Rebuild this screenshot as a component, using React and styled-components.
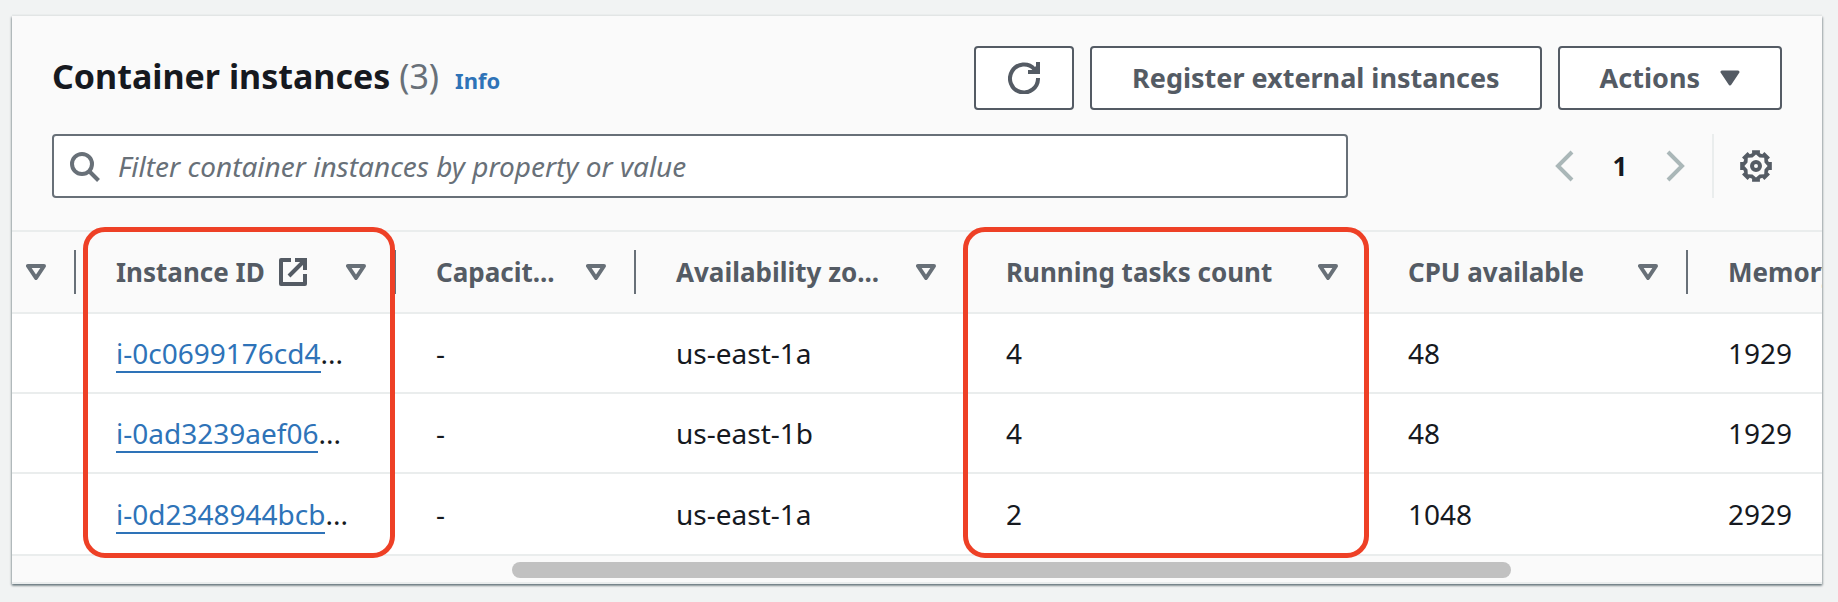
import React from "react";
import styled, { createGlobalStyle } from "styled-components";

const color = {
  page: "#f1f3f3",
  panel: "#fafafa",
  line: "#eaeded",
  text: "#16191f",
  control: "#545b64",
  muted: "#687078",
  link: "#2e73b8",
  disabled: "#aab7b8",
  highlight: "#ee4026",
};

const GlobalStyle = createGlobalStyle`
  *, *::before, *::after { box-sizing: border-box; }
  body {
    margin: 0;
    background: ${color.page};
    color: ${color.text};
    font: 28px/40px "Noto Sans", "Open Sans", sans-serif;
  }
  button, input { font: inherit; color: inherit; }
`;

const Page = styled.main`
  padding: 16px 16px 18px 12px;
`;

const Panel = styled.section`
  background: ${color.panel};
  box-shadow:
    0 2px 2px 0 rgba(0, 28, 36, 0.3),
    1px 1px 2px 0 rgba(0, 28, 36, 0.25),
    -1px 1px 2px 0 rgba(0, 28, 36, 0.25),
    0 -2px 0 0 ${color.line};
`;

const PanelHeader = styled.header`
  display: flex;
  flex-direction: column;
  gap: 24px;
  padding: 30px 40px 32px;
`;

const HeaderRow = styled.div`
  display: flex;
  align-items: center;
  justify-content: space-between;
`;

const TitleGroup = styled.div`
  display: flex;
  align-items: baseline;
  gap: 16px;
  padding-bottom: 2px;
`;

const Title = styled.h2`
  margin: 0;
  font-size: 34px;
  line-height: 44px;
  font-weight: 700;
`;

const Count = styled.span`
  color: ${color.muted};
  font-weight: 400;
`;

const InfoLink = styled.a`
  color: ${color.link};
  font-size: 22px;
  font-weight: 700;
  text-decoration: none;
`;

const ButtonGroup = styled.div`
  display: flex;
  gap: 16px;
`;

const Button = styled.button`
  display: inline-flex;
  align-items: center;
  justify-content: center;
  gap: 20px;
  height: 64px;
  padding: 0 ${(p) => (p.$iconOnly ? 32 : 40)}px;
  border: 2px solid ${color.control};
  border-radius: 4px;
  background: #fff;
  color: ${color.control};
  font-size: 27px;
  font-weight: 700;
  white-space: nowrap;
`;

const SearchBox = styled.label`
  display: flex;
  align-items: center;
  gap: 18px;
  flex: 0 1 1296px;
  height: 64px;
  padding: 0 14px;
  border: 2px solid ${color.muted};
  border-radius: 4px;
  background: #fff;
  color: ${color.muted};
`;

const SearchInput = styled.input`
  flex: 1;
  min-width: 0;
  padding: 0;
  border: 0;
  outline: 0;
  background: transparent;
  color: ${color.text};
  &::placeholder {
    color: ${color.muted};
    font-style: italic;
    opacity: 1;
  }
`;

const Tools = styled.div`
  display: flex;
  align-items: center;
  height: 64px;
`;

const Pagination = styled.nav`
  display: flex;
  align-items: center;
  height: 100%;
  padding-right: 26px;
  border-right: 2px solid ${color.line};
`;

const IconButton = styled.button`
  display: inline-flex;
  align-items: center;
  justify-content: center;
  padding: 0;
  border: 0;
  background: none;
  color: ${(p) => (p.disabled ? color.disabled : color.control)};
`;

const PageNumber = styled.button`
  width: 92px;
  padding: 0;
  border: 0;
  background: none;
  font-size: 26px;
  font-weight: 700;
`;

const Preferences = styled.div`
  display: flex;
  padding: 0 10px 0 26px;
`;

const TableArea = styled.div`
  position: relative;
`;

const TableViewport = styled.div`
  overflow: hidden;
  border-top: 2px solid ${color.line};
`;

const Table = styled.table`
  width: 1996px;
  min-width: 100%;
  table-layout: fixed;
  border-collapse: separate;
  border-spacing: 0;
`;

const HeaderCell = styled.th`
  height: 82px;
  padding: 0;
  border-bottom: 2px solid ${color.line};
  color: ${color.control};
  font-size: 26px;
  text-align: left;
`;

const HeaderContent = styled.div`
  display: flex;
  align-items: center;
  justify-content: space-between;
  height: 44px;
  padding: 0 28px 0 ${(p) => (p.$narrow ? 0 : 40)}px;
  border-right: 2px solid ${(p) => (p.$last ? "transparent" : color.muted)};
`;

const HeaderLabel = styled.span`
  display: flex;
  align-items: center;
  gap: 14px;
  white-space: nowrap;
`;

const Row = styled.tr`
  background: #fff;
`;

const Cell = styled.td`
  height: ${(p) => (p.$last ? 82 : 80)}px;
  padding: 0 0 0 40px;
  border-bottom: 2px solid ${color.line};
  white-space: nowrap;
`;

const InstanceLink = styled.a`
  display: inline-block;
  border-bottom: 2px solid ${color.link};
  color: ${color.link};
  line-height: 36px;
  text-decoration: none;
`;

const Highlight = styled.div`
  position: absolute;
  top: -3px;
  bottom: -2px;
  left: ${(p) => p.$left}px;
  width: ${(p) => p.$width}px;
  border: 5px solid ${color.highlight};
  border-radius: 22px;
  pointer-events: none;
`;

const ScrollTrack = styled.div`
  height: 28px;
  padding: 6px 0;
  border-bottom: 2px solid ${color.line};
`;

const ScrollThumb = styled.div`
  width: 55.2%;
  height: 16px;
  margin-left: 27.6%;
  border-radius: 8px;
  background: #c1c1c1;
`;

const SearchIcon = () => (
  <svg width="32" height="36" viewBox="0 0 32 36" fill="none" stroke="currentColor" strokeWidth="4" aria-hidden="true">
    <circle cx="14" cy="16" r="10" />
    <path d="M21 23 30.500 32.500" />
  </svg>
);

const RefreshIcon = () => (
  <svg width="32" height="32" viewBox="0 0 32 32" fill="none" stroke="currentColor" strokeWidth="4" aria-hidden="true">
    <path d="M30 16A14 14 0 1 1 26.500 7.200" />
    <path d="M20 10h10V0" />
    <path d="M28 4v6h-6z" fill="currentColor" stroke="none" />
  </svg>
);

const CaretIcon = () => (
  <svg width="20" height="16" viewBox="0 0 20 16" aria-hidden="true">
    <path d="M2 2h16l-8 12z" fill="currentColor" stroke="currentColor" strokeWidth="3" strokeLinejoin="round" />
  </svg>
);

const SortIcon = () => (
  <svg width="20" height="16" viewBox="0 0 20 16" aria-hidden="true">
    <path d="M2 2h16l-8 12z" fill="none" stroke={color.muted} strokeWidth="4" strokeLinejoin="round" />
  </svg>
);

const ChevronIcon = ({ direction }) => (
  <svg width="20" height="32" viewBox="0 0 20 32" fill="none" stroke="currentColor" strokeWidth="4" aria-hidden="true">
    <path d={direction === "left" ? "M18 2 4 16l14 14" : "M2 2l14 14L2 30"} />
  </svg>
);

const polar = (radius, degrees) => {
  const a = (degrees * Math.PI) / 180;
  return `${(16 + radius * Math.cos(a)).toFixed(2)} ${(16 + radius * Math.sin(a)).toFixed(2)}`;
};

const teeth = Array.from({ length: 8 }, (_, i) => i * 45);

const gearOutline = teeth
  .map((t) => [polar(13.3, t - 17), polar(16.3, t - 14), polar(16.3, t + 14), polar(13.3, t + 17)].join(" L"))
  .join(" L");

const gearOpening = teeth.map((t) => [polar(11.6, t), polar(9.2, t + 22.5)].join(" L")).join(" L");

const GearIcon = () => (
  <svg width="32" height="32" viewBox="0 0 32 32" aria-hidden="true">
    <path d={`M${gearOutline}Z M${gearOpening}Z`} fill="currentColor" fillRule="evenodd" />
    <circle cx="16" cy="16" r="4" fill="none" stroke="currentColor" strokeWidth="4" />
  </svg>
);

const ExternalIcon = () => (
  <svg width="28" height="28" viewBox="0 0 28 28" fill="none" stroke="currentColor" strokeWidth="4" aria-hidden="true">
    <path d="M12 2H2v24h24V16" strokeLinejoin="round" />
    <path d="M16 2h10v10M26 2 10 18" />
  </svg>
);

const columns = [
  { key: "prev", width: 64, label: "", narrow: true },
  { key: "id", width: 320, label: "Instance ID", external: true },
  { key: "capacity", width: 240, label: "Capacit..." },
  { key: "zone", width: 330, label: "Availability zo..." },
  { key: "tasks", width: 402, label: "Running tasks count" },
  { key: "cpu", width: 320, label: "CPU available" },
  { key: "memory", width: 320, label: "Memory available", last: true },
];

const rows = [
  { id: "i-0c0699176cd4", zone: "us-east-1a", tasks: 4, cpu: 48, memory: 1929 },
  { id: "i-0ad3239aef06", zone: "us-east-1b", tasks: 4, cpu: 48, memory: 1929 },
  { id: "i-0d2348944bcb", zone: "us-east-1a", tasks: 2, cpu: 1048, memory: 2929 },
];

export default function App() {
  return (
    <Page>
      <GlobalStyle />
      <Panel>
        <PanelHeader>
          <HeaderRow>
            <TitleGroup>
              <Title>
                Container instances <Count>(3)</Count>
              </Title>
              <InfoLink href="#info">Info</InfoLink>
            </TitleGroup>
            <ButtonGroup>
              <Button $iconOnly aria-label="Refresh">
                <RefreshIcon />
              </Button>
              <Button>Register external instances</Button>
              <Button>
                Actions
                <CaretIcon />
              </Button>
            </ButtonGroup>
          </HeaderRow>
          <HeaderRow>
            <SearchBox>
              <SearchIcon />
              <SearchInput
                type="text"
                aria-label="Filter container instances"
                placeholder="Filter container instances by property or value"
              />
            </SearchBox>
            <Tools>
              <Pagination aria-label="Pagination">
                <IconButton disabled aria-label="Previous page">
                  <ChevronIcon direction="left" />
                </IconButton>
                <PageNumber aria-current="page">1</PageNumber>
                <IconButton disabled aria-label="Next page">
                  <ChevronIcon direction="right" />
                </IconButton>
              </Pagination>
              <Preferences>
                <IconButton aria-label="Preferences">
                  <GearIcon />
                </IconButton>
              </Preferences>
            </Tools>
          </HeaderRow>
        </PanelHeader>
        <TableArea>
          <TableViewport>
            <Table>
              <colgroup>
                {columns.map((c) => (
                  <col key={c.key} width={c.width} />
                ))}
              </colgroup>
              <thead>
                <tr>
                  {columns.map((c) => (
                    <HeaderCell key={c.key} scope="col">
                      <HeaderContent $narrow={c.narrow} $last={c.last}>
                        <HeaderLabel>
                          {c.label}
                          {c.external && <ExternalIcon />}
                        </HeaderLabel>
                        <IconButton aria-label={`Sort ${c.label}`}>
                          <SortIcon />
                        </IconButton>
                      </HeaderContent>
                    </HeaderCell>
                  ))}
                </tr>
              </thead>
              <tbody>
                {rows.map((r, i) => {
                  const last = i === rows.length - 1;
                  return (
                    <Row key={r.id}>
                      <Cell $last={last} />
                      <Cell $last={last}>
                        <InstanceLink href={`#${r.id}`}>{r.id}</InstanceLink>...
                      </Cell>
                      <Cell $last={last}>-</Cell>
                      <Cell $last={last}>{r.zone}</Cell>
                      <Cell $last={last}>{r.tasks}</Cell>
                      <Cell $last={last}>{r.cpu}</Cell>
                      <Cell $last={last}>{r.memory}</Cell>
                    </Row>
                  );
                })}
              </tbody>
            </Table>
          </TableViewport>
          <Highlight $left={71} $width={312} />
          <Highlight $left={951} $width={406} />
        </TableArea>
        <ScrollTrack>
          <ScrollThumb />
        </ScrollTrack>
      </Panel>
    </Page>
  );
}
